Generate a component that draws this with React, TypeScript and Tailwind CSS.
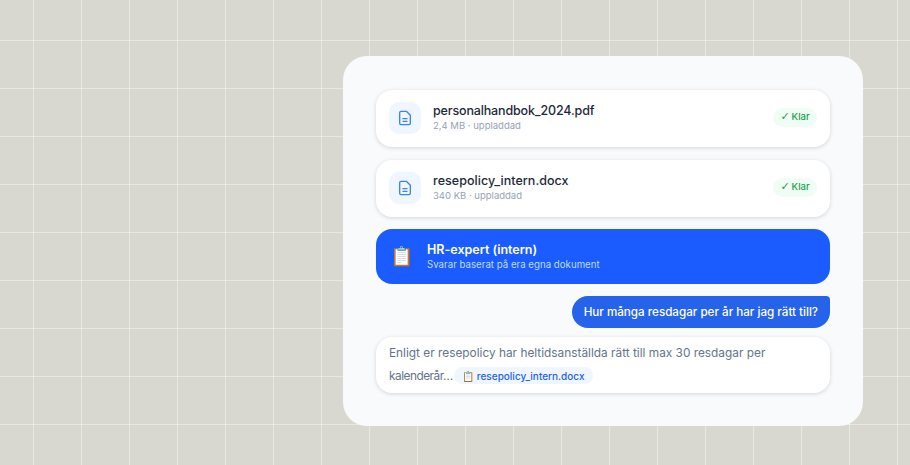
const FILES = [
  { name: 'personalhandbok_2024.pdf', meta: '2,4 MB · uppladdad', tracking: 'tracking-[-0.15px]' },
  { name: 'resepolicy_intern.docx', meta: '340 KB · uppladdad', tracking: 'tracking-[0.05px]' },
];

function DocIcon() {
  return (
    <svg width="16" height="16" viewBox="0 0 24 24" fill="none" stroke="#3b82f6" strokeWidth="2" strokeLinecap="round" strokeLinejoin="round">
      <path d="M14 2H6a2 2 0 0 0-2 2v16a2 2 0 0 0 2 2h12a2 2 0 0 0 2-2V8z" />
      <path d="M9 13h6" />
      <path d="M9 17h6" />
    </svg>
  );
}

export default function App() {
  return (
    <div className="h-[465px] w-[910px] overflow-hidden bg-[#d8d8d0] bg-[linear-gradient(rgba(255,255,255,0.4)_1px,transparent_1px),linear-gradient(90deg,rgba(255,255,255,0.4)_1px,transparent_1px)] bg-[size:48px_48px] bg-[position:33px_40px] pl-[343px] pt-[56px] font-['Inter','Liberation_Sans',sans-serif]">
      <div className="flex h-[370px] w-[520px] flex-col rounded-3xl bg-[#f8fafc] px-[33px] pt-[34px]">
        {FILES.map((file) => (
          <div key={file.name} className="mb-[13px] flex h-[57px] items-start rounded-2xl bg-white pt-3 pl-[13px] pr-[13px] shadow-[0_1px_4px_rgba(0,0,0,0.15)]">
            <div className="flex h-8 w-8 items-center justify-center rounded-[10px] bg-[#eff6ff]">
              <DocIcon />
            </div>
            <div className="ml-3 mt-[1px] flex-1">
              <div className={`text-[12.5px] leading-4 font-[550] text-[#1e293b] ${file.tracking}`}>{file.name}</div>
              <div className="text-[9.5px] leading-[14px] text-[#94a3b8]">{file.meta}</div>
            </div>
            <span className="mt-[6px] flex h-[19px] w-11 items-center justify-center gap-[2px] rounded-full bg-[#f0fdf4] text-[9.5px] font-medium text-[#16a34a]">
              <span className="font-['DejaVu_Sans',sans-serif] text-[11px]">✓</span>
              Klar
            </span>
          </div>
        ))}
        <div className="flex h-[55px] items-center rounded-2xl bg-[#1a5cff] pl-[14px] -mt-[1px]">
          <span className="text-[19px] leading-none">📋</span>
          <div className="ml-[13px]">
            <div className="text-[12.5px] leading-4 font-semibold text-white">HR-expert (intern)</div>
            <div className="text-[9.7px] leading-[14px] text-[#bfdbfe]">Svarar baserat på era egna dokument</div>
          </div>
        </div>
        <div className="mt-3 flex justify-end">
          <div className="flex h-8 items-center rounded-[16px_4px_16px_16px] bg-[#2563eb] px-3 pt-[1px] text-[11.65px] font-medium text-white">Hur många resdagar per år har jag rätt till?</div>
        </div>
        <div className="mt-[9px] h-[56px] rounded-2xl bg-white px-[13px] pt-[5px] text-[11.85px] leading-[22px] text-[#64748b] shadow-[0_1px_4px_rgba(0,0,0,0.15)]">
          <div>Enligt er resepolicy har heltidsanställda rätt till max 30 resdagar per</div>
          <div className="mt-[1px] flex items-center">
            <span className="tracking-[-0.5px]">kalenderår…</span>
            <span className="ml-[1px] -mt-[1px] flex h-[17px] items-center rounded-full bg-[#eff6ff] px-[8.5px] text-[10px] font-medium text-[#2563eb]">📋 resepolicy_intern.docx</span>
          </div>
        </div>
      </div>
    </div>
  );
}
